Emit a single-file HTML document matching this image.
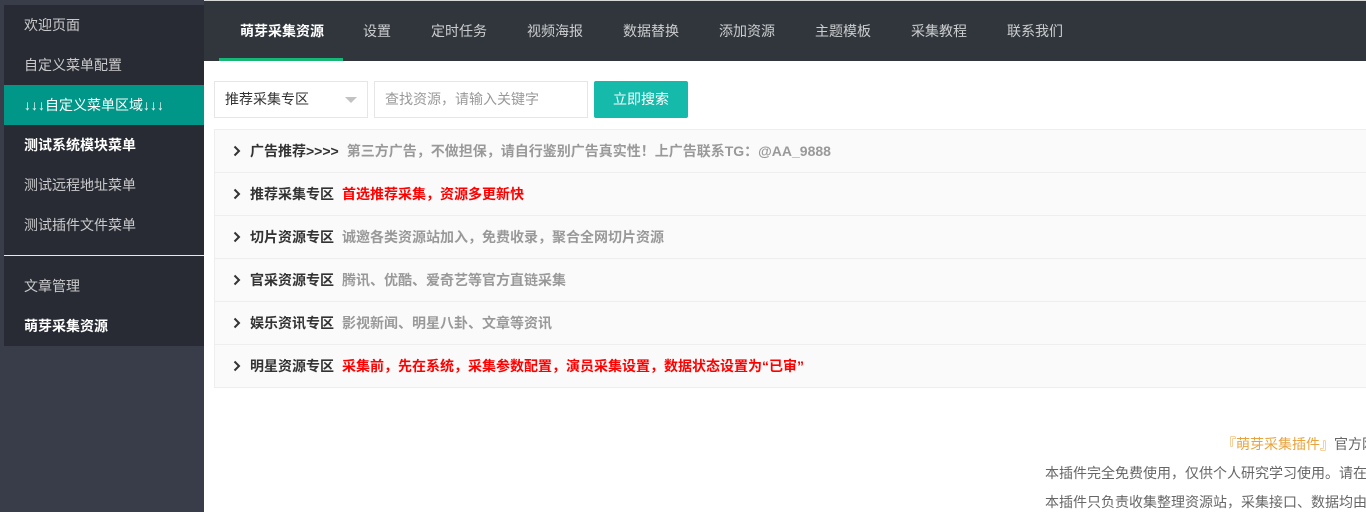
<!DOCTYPE html>
<html><head><meta charset="utf-8"><style>
*{margin:0;padding:0;box-sizing:border-box}
body{width:1366px;height:512px;overflow:hidden;background:#fff;font-family:"Liberation Sans","Noto Sans CJK SC",sans-serif;font-size:14px;position:relative}
#side{position:absolute;left:0;top:0;width:204px;height:512px;background:#393d49}
#panel{position:absolute;left:4px;top:5px;width:200px;height:341px;background:#282b33}
.si{position:absolute;left:0;width:200px;height:40px;line-height:40px;padding-left:20px;color:rgba(255,255,255,.75);font-size:14px}
.si.b{color:#fff;font-weight:bold}
.si.on{background:#009688;color:#fff}
#div{position:absolute;left:0;top:250px;width:200px;height:1px;background:#e8e8e8}
#nav{position:absolute;left:204px;top:1px;width:1162px;height:60px;background:#30363c}
#topline{position:absolute;left:204px;top:0;width:1162px;height:1px;background:#d8d8d8}
.ni{position:absolute;top:0;height:60px;line-height:60px;color:rgba(255,255,255,.75);font-size:14px}
.ni.on{color:#fff;font-weight:bold}
#ul{position:absolute;left:15px;top:57px;width:124px;height:3px;background:#16b777}
.box{position:absolute;top:81px;height:37px;border:1px solid #e6e6e6;background:#fff;line-height:35px;font-size:14px}
#btn{position:absolute;left:594px;top:81px;width:94px;height:37px;background:#16baaa;color:#fff;line-height:37px;text-align:center;border-radius:2px}
#colla{position:absolute;left:214px;top:129px;width:1160px;height:259px;border:1px solid #eee;background:#fafafa}
.row{position:absolute;left:0;width:1160px;height:43px;line-height:42px;border-bottom:1px solid #eee;font-weight:bold;padding-left:35px}
.row:last-child{border-bottom:none}
.row svg{position:absolute;left:18px;top:15px}
.row .t{color:#333;margin-right:8px}
.g{color:#999}.r{color:#f00}
.ft{position:absolute;font-size:14px;color:#666;white-space:nowrap}
</style></head><body>
<div id="side"><div id="panel">
<div class="si" style="top:0">欢迎页面</div>
<div class="si" style="top:40px">自定义菜单配置</div>
<div class="si on" style="top:80px">↓↓↓自定义菜单区域↓↓↓</div>
<div class="si b" style="top:120px">测试系统模块菜单</div>
<div class="si" style="top:160px">测试远程地址菜单</div>
<div class="si" style="top:200px">测试插件文件菜单</div>
<div id="div"></div>
<div class="si" style="top:261px">文章管理</div>
<div class="si b" style="top:301px">萌芽采集资源</div>
</div></div>
<div id="topline"></div>
<div id="nav">
<div class="ni on" style="left:36px">萌芽采集资源</div>
<div class="ni" style="left:159px">设置</div>
<div class="ni" style="left:227px">定时任务</div>
<div class="ni" style="left:323px">视频海报</div>
<div class="ni" style="left:419px">数据替换</div>
<div class="ni" style="left:515px">添加资源</div>
<div class="ni" style="left:611px">主题模板</div>
<div class="ni" style="left:707px">采集教程</div>
<div class="ni" style="left:803px">联系我们</div>
<div id="ul"></div>
</div>
<div class="box" style="left:214px;width:154px;padding-left:10px;color:#333">推荐采集专区<span style="position:absolute;right:10px;top:15px;width:0;height:0;border-left:6px solid transparent;border-right:6px solid transparent;border-top:6px solid #c2c2c2"></span></div>
<div class="box" style="left:374px;width:214px;padding-left:10px;color:#999">查找资源，请输入关键字</div>
<div id="btn">立即搜索</div>
<div id="colla">
<div class="row" style="top:0"><svg width="8" height="12"><polyline points="1.5,1.5 6,6 1.5,10.5" fill="none" stroke="#333" stroke-width="2"/></svg><span class="t">广告推荐&gt;&gt;&gt;&gt;</span><span class="g">第三方广告，不做担保，请自行鉴别广告真实性！上广告联系TG：@AA_9888</span></div>
<div class="row" style="top:43px"><svg width="8" height="12"><polyline points="1.5,1.5 6,6 1.5,10.5" fill="none" stroke="#333" stroke-width="2"/></svg><span class="t">推荐采集专区</span><span class="r">首选推荐采集，资源多更新快</span></div>
<div class="row" style="top:86px"><svg width="8" height="12"><polyline points="1.5,1.5 6,6 1.5,10.5" fill="none" stroke="#333" stroke-width="2"/></svg><span class="t">切片资源专区</span><span class="g">诚邀各类资源站加入，免费收录，聚合全网切片资源</span></div>
<div class="row" style="top:129px"><svg width="8" height="12"><polyline points="1.5,1.5 6,6 1.5,10.5" fill="none" stroke="#333" stroke-width="2"/></svg><span class="t">官采资源专区</span><span class="g">腾讯、优酷、爱奇艺等官方直链采集</span></div>
<div class="row" style="top:172px"><svg width="8" height="12"><polyline points="1.5,1.5 6,6 1.5,10.5" fill="none" stroke="#333" stroke-width="2"/></svg><span class="t">娱乐资讯专区</span><span class="g">影视新闻、明星八卦、文章等资讯</span></div>
<div class="row" style="top:215px"><svg width="8" height="12"><polyline points="1.5,1.5 6,6 1.5,10.5" fill="none" stroke="#333" stroke-width="2"/></svg><span class="t">明星资源专区</span><span class="r">采集前，先在系统，采集参数配置，演员采集设置，数据状态设置为“已审”</span></div>
</div>
<div class="ft" style="left:1222px;top:434px"><span style="color:#e8a33d">『萌芽采集插件』</span>官方网站</div>
<div class="ft" style="left:1045px;top:463px">本插件完全免费使用，仅供个人研究学习使用。请在</div>
<div class="ft" style="left:1045px;top:492px">本插件只负责收集整理资源站，采集接口、数据均由</div>
</body></html>
